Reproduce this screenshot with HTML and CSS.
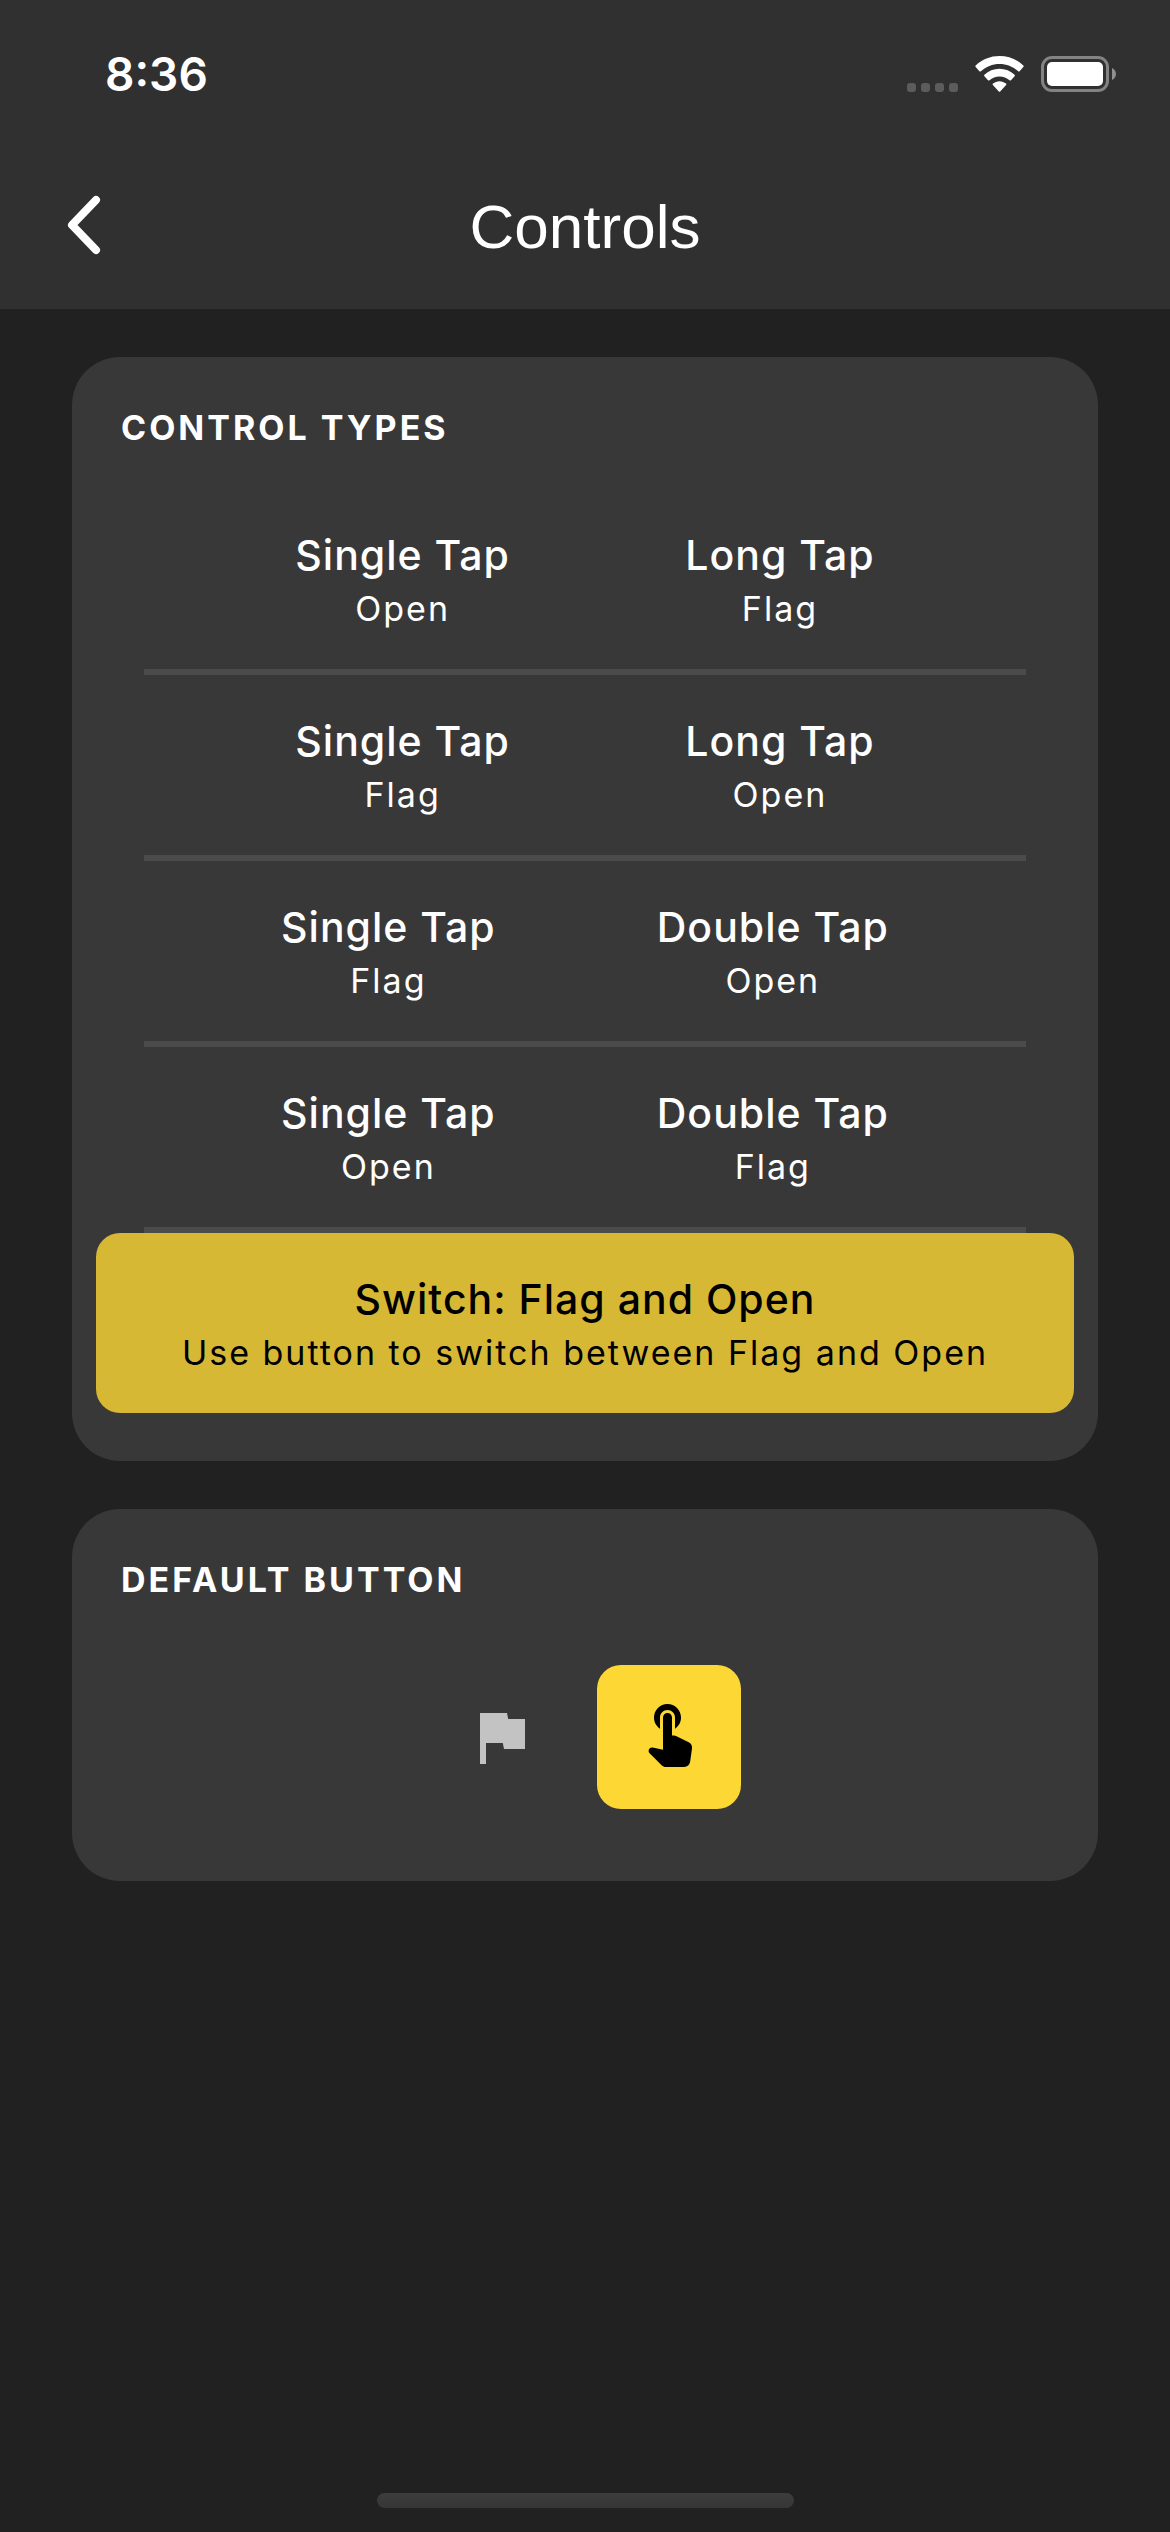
FILE: index.html
```html
<!DOCTYPE html>
<html lang="en">
<head>
<meta charset="utf-8">
<meta name="viewport" content="width=device-width, initial-scale=1">
<title>Controls</title>
<link rel="stylesheet" href="styles.css">
</head>
<body>
<header class="header">
  <div class="status">
    <time class="clock">8:36</time>
    <div class="indicators">
      <svg class="signal" width="51" height="36" viewBox="0 0 51 36" aria-hidden="true">
        <rect x="0" y="27" width="9" height="9" rx="3"/><rect x="14" y="27" width="9" height="9" rx="3"/><rect x="28" y="27" width="9" height="9" rx="3"/><rect x="42" y="27" width="9" height="9" rx="3"/>
      </svg>
      <svg class="wifi" width="49" height="36" viewBox="0 0 49 36" aria-hidden="true">
        <path d="M24.500 0C33.500 0 42 3.400 48.300 9.400Q49 10.100 48.300 10.900L44.600 15.200Q43.900 15.900 43.100 15.200C38 10.500 31.500 7.900 24.500 7.900S11 10.500 5.900 15.200Q5.100 15.900 4.400 15.200L.7 10.900Q0 10.100.7 9.400C7 3.400 15.500 0 24.500 0Z"/>
        <path d="M24.500 12.800C30.300 12.800 35.500 14.900 39.600 18.700Q40.300 19.400 39.600 20.200L36 24.200Q35.300 24.900 34.500 24.200C31.800 21.900 28.300 20.400 24.500 20.400S17.200 21.900 14.500 24.200Q13.700 24.900 13 24.200L9.400 20.200Q8.700 19.400 9.400 18.700C13.500 14.900 18.700 12.800 24.500 12.800Z"/>
        <path d="M24.500 25.200C27 25.200 29.200 26.100 31 27.600Q31.800 28.300 31.100 29L25.200 35.400Q24.500 36.100 23.800 35.400L17.900 29Q17.200 28.300 18 27.600C19.800 26.100 22 25.200 24.500 25.200Z"/>
      </svg>
      <svg class="battery" width="75" height="36" viewBox="0 0 75 36" aria-hidden="true">
        <rect class="shell" x="1.500" y="1.500" width="65" height="33" rx="9.500"/>
        <rect class="charge" x="6" y="6" width="56" height="24" rx="5"/>
        <path class="nub" d="M71 12C73.500 13 75 15.500 75 18S73.500 23 71 24Z"/>
      </svg>
    </div>
  </div>
  <div class="appbar">
    <button class="back" type="button" aria-label="Back">
      <svg width="40" height="64" viewBox="0 0 40 64" aria-hidden="true"><path d="M32 7L8 32L32 57"/></svg>
    </button>
    <h1 class="title">Controls</h1>
  </div>
</header>

<main class="content">
  <section class="card">
    <h2 class="card-title">CONTROL TYPES</h2>
    <ul class="options">
      <li><button class="option" type="button">
        <span class="pair"><span class="action">Single Tap</span><span class="result">Open</span></span>
        <span class="pair"><span class="action">Long Tap</span><span class="result">Flag</span></span>
      </button></li>
      <li><button class="option" type="button">
        <span class="pair"><span class="action">Single Tap</span><span class="result">Flag</span></span>
        <span class="pair"><span class="action">Long Tap</span><span class="result">Open</span></span>
      </button></li>
      <li><button class="option" type="button">
        <span class="pair"><span class="action">Single Tap</span><span class="result">Flag</span></span>
        <span class="pair"><span class="action">Double Tap</span><span class="result">Open</span></span>
      </button></li>
      <li><button class="option" type="button">
        <span class="pair"><span class="action">Single Tap</span><span class="result">Open</span></span>
        <span class="pair"><span class="action">Double Tap</span><span class="result">Flag</span></span>
      </button></li>
      <li><button class="option selected" type="button" aria-pressed="true">
        <span class="pair"><span class="action">Switch: Flag and Open</span><span class="result">Use button to switch between Flag and Open</span></span>
      </button></li>
    </ul>
  </section>

  <section class="card">
    <h2 class="card-title">DEFAULT BUTTON</h2>
    <div class="modes">
      <button class="mode" type="button" aria-label="Flag">
        <svg width="72" height="72" viewBox="0 0 24 24" aria-hidden="true"><path d="M14.400 6L14 4H5v17h2v-7h5.600l.4 2h7V6z"/></svg>
      </button>
      <button class="mode active" type="button" aria-label="Open" aria-pressed="true">
        <svg width="72" height="72" viewBox="0 0 24 24" aria-hidden="true"><path d="M9 9.240V5.500C9 4.120 10.120 3 11.500 3S14 4.120 14 5.500v3.740c1.210-.81 2-2.180 2-3.740C16 3.010 13.990 1 11.500 1S7 3.010 7 5.500c0 1.560.79 2.930 2 3.740zm5.500 2.470c-.28-.14-.58-.21-.89-.21H13v-6c0-.83-.67-1.500-1.500-1.500S10 4.670 10 5.500v10.740l-3.440-.72c-.37-.08-.76.04-1.030.31-.43.44-.43 1.140 0 1.580l4.010 4.010c.38.37.89.58 1.420.58h6.100c1 0 1.840-.73 1.980-1.720l.63-4.470c.12-.85-.32-1.690-1.090-2.070l-4.080-2.030z"/></svg>
      </button>
    </div>
  </section>
</main>

<footer class="home"><div class="home-bar"></div></footer>
</body>
</html>
```

FILE: styles.css
```css
* {
  box-sizing: border-box;
}

body {
  margin: 0;
  min-height: 100vh;
  display: flex;
  flex-direction: column;
  background: #212121;
  color: #fff;
  font-family: Inter, "Liberation Sans", sans-serif;
}

button {
  border: 0;
  padding: 0;
  background: none;
  color: inherit;
  font: inherit;
  cursor: pointer;
}

svg {
  display: block;
}

.header {
  background: #303030;
}

.status {
  height: 141px;
  padding: 7px 54px 0 105px;
  display: flex;
  align-items: center;
  justify-content: space-between;
}

.clock {
  font-size: 46px;
  font-weight: 600;
  line-height: 56px;
}

.indicators {
  display: flex;
  gap: 17px;
}

.signal {
  fill: #5c5c5c;
}

.wifi,
.charge {
  fill: #fff;
}

.shell {
  fill: none;
  stroke: #838383;
  stroke-width: 3;
}

.nub {
  fill: #8f8f8f;
}

.appbar {
  height: 168px;
  padding: 0 64px;
  display: grid;
  grid-template-columns: 40px 1fr 40px;
  align-items: center;
}

.back path {
  fill: none;
  stroke: #fff;
  stroke-width: 8;
  stroke-linecap: round;
  stroke-linejoin: round;
}

.title {
  margin: 0;
  padding-top: 4px;
  font-family: "Liberation Sans", Arial, sans-serif;
  font-size: 62px;
  font-weight: 400;
  line-height: 80px;
  text-align: center;
}

.content {
  padding: 48px 72px;
  display: flex;
  flex-direction: column;
  gap: 48px;
}

.card {
  border-radius: 48px;
  background: #383838;
}

.card-title {
  margin: 0;
  padding: 49px 49px 0;
  font-size: 34px;
  font-weight: 700;
  line-height: 44px;
  letter-spacing: 3px;
}

.options {
  margin: 0;
  padding: 39px 24px 48px;
  list-style: none;
}

.options li:not(:last-child)::after {
  content: "";
  display: block;
  height: 6px;
  margin: 0 48px;
  background: #4b4b4b;
}

.option {
  width: 100%;
  padding: 38px 24px 34px;
  display: flex;
  justify-content: space-evenly;
  border-radius: 24px;
}

.option.selected {
  background: #d6b835;
  color: #000;
}

.pair {
  display: flex;
  flex-direction: column;
  align-items: center;
}

.action {
  font-size: 41px;
  font-weight: 500;
  line-height: 56px;
  letter-spacing: 1px;
}

.result {
  font-size: 34px;
  font-weight: 400;
  line-height: 52px;
  letter-spacing: 2px;
}

.modes {
  padding: 63px 48px 72px;
  display: flex;
  justify-content: center;
  gap: 24px;
}

.mode {
  width: 144px;
  height: 144px;
  display: grid;
  place-items: center;
  border-radius: 24px;
  color: #c3c3c3;
}

.mode path {
  fill: currentColor;
}

.mode.active {
  background: #fdd835;
  color: #000;
}

.home {
  margin-top: auto;
  padding-bottom: 24px;
}

.home-bar {
  width: 417px;
  max-width: 80%;
  height: 15px;
  margin: 0 auto;
  border-radius: 8px;
  background: linear-gradient(#3d3d3d, #363636);
}
```
